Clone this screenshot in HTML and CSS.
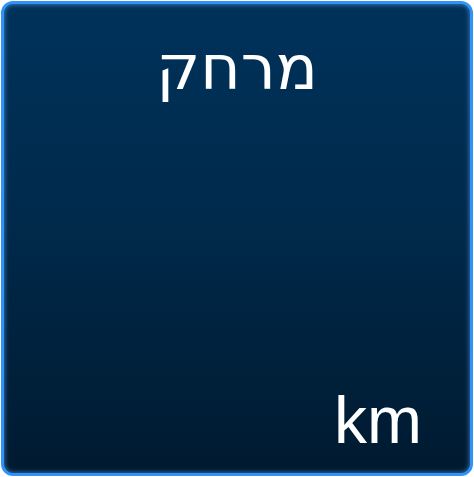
FILE: index.html
```html
<!DOCTYPE html>
<html lang="he">
<head>
<meta charset="utf-8">
<link rel="stylesheet" href="styles.css">
</head>
<body>
<div class="tile">
  <div class="label" dir="rtl">מרחק</div>
  <div class="unit">km</div>
</div>
</body>
</html>
```
FILE: styles.css
```css
html, body { margin: 0; padding: 0; background: #ffffff; }
body { width: 474px; height: 477px; }
.tile {
  box-sizing: border-box;
  margin: 1px 1px;
  width: 472px;
  height: 475px;
  border: 3px solid #3093f8;
  border-radius: 12px;
  background: linear-gradient(to bottom, #00325a 0%, #002b4e 40%, #001a30 100%);
  box-shadow: inset 0 0 4px 1px rgba(90, 170, 255, 0.55);
  display: flex;
  flex-direction: column;
  justify-content: space-between;
  color: #ffffff;
}
.label {
  font-family: "DejaVu Sans", sans-serif;
  text-align: center;
  font-size: 62px;
  line-height: 1;
  padding-top: 33px;
}
.unit {
  font-family: "Liberation Sans", Arial, sans-serif;
  text-align: right;
  font-size: 66px;
  line-height: 1;
  padding-right: 48px;
  padding-bottom: 20px;
}
```
